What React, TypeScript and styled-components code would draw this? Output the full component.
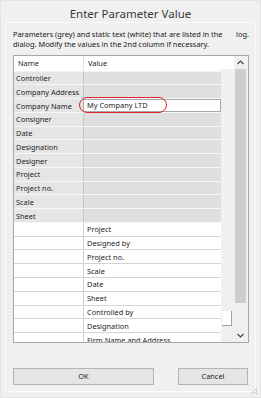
import React from 'react'
import styled, { createGlobalStyle } from 'styled-components'

const GlobalStyle = createGlobalStyle`
    html, body {
        margin: 0;
        padding: 0;
        background: #f0f0f0;
    }
    body {
        font-family: "Noto Sans", "Open Sans", sans-serif;
        color: #1e1e1e;
    }
`

interface IRow {
    name: string
    value: string
    grey: boolean
    editing?: boolean
}

const ROWS: IRow[] = [
    { name: 'Controller', value: '', grey: true },
    { name: 'Company Address', value: '', grey: true },
    { name: 'Company Name', value: 'My Company LTD', grey: true, editing: true },
    { name: 'Consigner', value: '', grey: true },
    { name: 'Date', value: '', grey: true },
    { name: 'Designation', value: '', grey: true },
    { name: 'Designer', value: '', grey: true },
    { name: 'Project', value: '', grey: true },
    { name: 'Project no.', value: '', grey: true },
    { name: 'Scale', value: '', grey: true },
    { name: 'Sheet', value: '', grey: true },
    { name: '', value: 'Project', grey: false },
    { name: '', value: 'Designed by', grey: false },
    { name: '', value: 'Project no.', grey: false },
    { name: '', value: 'Scale', grey: false },
    { name: '', value: 'Date', grey: false },
    { name: '', value: 'Sheet', grey: false },
    { name: '', value: 'Controlled by', grey: false },
    { name: '', value: 'Designation', grey: false },
    { name: '', value: 'Firm Name and Address', grey: false },
]

const App: React.FC = () => {
    return (
        <>
            <GlobalStyle />
            <Window>
                <Title>Enter Parameter Value</Title>
                <Panel>
                    <Hint>
                        <HintLine>
                            <span>Parameters (grey) and static text (white) that are listed in the</span>
                            <span>log.</span>
                        </HintLine>
                        <HintLine>
                            <span>dialog. Modify the values in the 2nd column if necessary.</span>
                        </HintLine>
                    </Hint>

                    <TableBox>
                        <List>
                            <HeaderRow>
                                <HeaderCell>Name</HeaderCell>
                                <HeaderCell $divider>Value</HeaderCell>
                            </HeaderRow>
                            {ROWS.map((row, i) => (
                                <Row key={i} $grey={row.grey}>
                                    <NameCell $grey={row.grey}>{row.name}</NameCell>
                                    {row.editing ? (
                                        <EditCell>
                                            {row.value}
                                            <Highlight />
                                        </EditCell>
                                    ) : (
                                        <ValueCell $grey={row.grey}>{row.value}</ValueCell>
                                    )}
                                </Row>
                            ))}
                        </List>
                        <ScrollArea>
                            <Filler>
                                <FillerTop />
                                <FillerBox />
                            </Filler>
                            <Track>
                                <Arrow>
                                    <svg width="7" height="5" viewBox="0 0 7 5">
                                        <path d="M0.5 4 L3.5 1 L6.5 4" fill="none" stroke="#444" strokeWidth="1.1" />
                                    </svg>
                                </Arrow>
                                <ThumbWrap>
                                    <Thumb />
                                </ThumbWrap>
                                <Arrow>
                                    <svg width="7" height="5" viewBox="0 0 7 5">
                                        <path d="M0.5 1 L3.5 4 L6.5 1" fill="none" stroke="#444" strokeWidth="1.1" />
                                    </svg>
                                </Arrow>
                            </Track>
                        </ScrollArea>
                    </TableBox>

                    <Buttons>
                        <Button $width="141px">OK</Button>
                        <Button $width="70px">Cancel</Button>
                    </Buttons>
                </Panel>
                <Grip>
                    <svg width="8" height="8" viewBox="0 0 8 8">
                        <path d="M7 1 L1 7 M7 3.5 L3.5 7 M7 6 L6 7" stroke="#9a9a9a" strokeWidth="1" strokeDasharray="1 1" />
                    </svg>
                </Grip>
            </Window>
        </>
    )
}

export default App

const Window = styled.div`
    position: relative;
    width: 261px;
    height: 398px;
    box-sizing: border-box;
    background: #f0f0f0;
    border: 1px solid #e4e4e4;
    padding: 0 4px 5px 4px;
    display: flex;
    flex-direction: column;
`

const Title = styled.div`
    height: 21px;
    line-height: 26px;
    text-align: center;
    font-size: 11.5px;
    color: #3a3a3a;
`

const Panel = styled.div`
    flex: 1;
    box-sizing: border-box;
    border: 1px solid #fbfbfb;
    padding: 6px 6px 0 7px;
    display: flex;
    flex-direction: column;
`

const Hint = styled.div`
    font-size: 7.4px;
    line-height: 10px;
    margin-bottom: 6px;
    color: #202020;
`

const HintLine = styled.div`
    display: flex;
    justify-content: space-between;
    white-space: nowrap;
`

const TableBox = styled.div`
    height: 288px;
    box-sizing: border-box;
    border: 1px solid #a8a8a8;
    display: flex;
    overflow: hidden;
    background: #f0f0f0;
`

const List = styled.div`
    width: 207px;
    overflow: hidden;
    display: flex;
    flex-direction: column;
`

const HeaderRow = styled.div`
    display: grid;
    grid-template-columns: 69px 1fr;
    height: 15.5px;
    flex: none;
    background: #fff;
    border-bottom: 1px solid #f2f2f2;
    box-sizing: border-box;
`

const HeaderCell = styled.div<{ $divider?: boolean }>`
    font-size: 7.4px;
    line-height: 15px;
    padding-left: 4px;
    border-left: ${p => p.$divider ? '1px solid #e4e4e4' : 'none'};
`

const Row = styled.div<{ $grey: boolean }>`
    display: grid;
    grid-template-columns: 69px 1fr;
    height: 13.77px;
    flex: none;
    box-sizing: border-box;
    border-bottom: 1px solid ${p => p.$grey ? '#f7f7f7' : '#d4d4d4'};
    background: ${p => p.$grey ? '#e2e2e2' : '#fff'};
`

const cellText = `
    font-size: 7.4px;
    line-height: 11px;
    padding-top: 1.5px;
    box-sizing: border-box;
    white-space: nowrap;
`

const NameCell = styled.div<{ $grey: boolean }>`
    ${cellText}
    overflow: hidden;
    padding-left: 2px;
    background: ${p => p.$grey ? '#e5e5e5' : '#fff'};
`

const ValueCell = styled.div<{ $grey: boolean }>`
    ${cellText}
    overflow: hidden;
    padding-left: 3px;
    border-left: 1px solid ${p => p.$grey ? '#c4c4c4' : '#cfcfcf'};
    background: ${p => p.$grey ? '#dfdfdf' : '#fff'};
`

const EditCell = styled.div`
    position: relative;
    font-size: 7.4px;
    line-height: 10.5px;
    padding-left: 3px;
    background: #fff;
    border: 1px solid #a8a8a8;
    white-space: nowrap;
`

const Highlight = styled.div`
    position: absolute;
    left: -5px;
    top: -3px;
    width: 86px;
    height: 14px;
    border: 1.5px solid #e0252b;
    border-radius: 9px;
`

const ScrollArea = styled.div`
    flex: 1;
    display: flex;
`

const Filler = styled.div`
    width: 13px;
    display: flex;
    flex-direction: column;
    background: #f0f0f0;
`

const FillerTop = styled.div`
    height: 13px;
    background: #fff;
`

const FillerBox = styled.div`
    margin-top: 242px;
    margin-left: 1px;
    width: 9px;
    height: 14px;
    background: #fff;
    border-right: 1px solid #a0a0a0;
    border-bottom: 1px solid #a0a0a0;
`

const Track = styled.div`
    flex: 1;
    display: flex;
    flex-direction: column;
    background: #f0f0f0;
`

const Arrow = styled.div`
    height: 13px;
    display: flex;
    align-items: center;
    justify-content: center;
    padding-right: 1px;
`

const ThumbWrap = styled.div`
    flex: 1;
    padding: 0 2px 26px 1px;
`

const Thumb = styled.div`
    height: 100%;
    background: #cdcdcd;
`

const Buttons = styled.div`
    display: flex;
    justify-content: space-between;
    margin-top: 25px;
    padding-right: 1px;
`

const Button = styled.div<{ $width: string }>`
    width: ${p => p.$width};
    height: 17px;
    box-sizing: border-box;
    border: 1px solid #b4b4b4;
    background: #e5e5e5;
    font-size: 7.4px;
    line-height: 15px;
    text-align: center;
    color: #1e1e1e;
`

const Grip = styled.div`
    position: absolute;
    right: 2px;
    bottom: 2px;
    width: 8px;
    height: 8px;
    display: flex;
`
